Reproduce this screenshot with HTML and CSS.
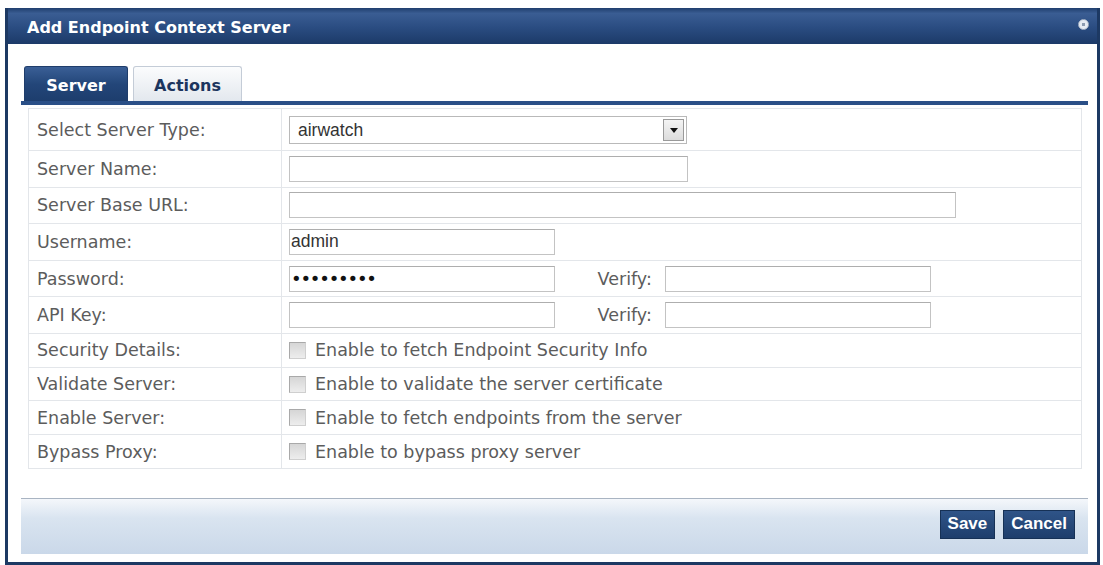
FILE: index.html
```html
<!DOCTYPE html>
<html lang="en">
<head>
    <meta charset="UTF-8">
    <title>Add Endpoint Context Server</title>
    <link rel="stylesheet" href="styles.css">
</head>
<body>
    <div class="dialog">
        <div class="titlebar">
            <span class="title">Add Endpoint Context Server</span>
            <span class="close"></span>
        </div>
        <div class="dialog-body">
            <div class="tabs">
                <div class="tab active">Server</div>
                <div class="tab">Actions</div>
            </div>
            <div class="panel">
                <table class="form">
                    <tr class="row-select">
                        <td class="label">Select Server Type:</td>
                        <td class="field">
                            <div class="select-box">
                                <select>
                                    <option>airwatch</option>
                                </select>
                                <span class="arrow"></span>
                            </div>
                        </td>
                    </tr>
                    <tr class="row-input">
                        <td class="label">Server Name:</td>
                        <td class="field"><input type="text" class="w-name"></td>
                    </tr>
                    <tr class="row-input">
                        <td class="label">Server Base URL:</td>
                        <td class="field"><input type="text" class="w-url"></td>
                    </tr>
                    <tr class="row-input">
                        <td class="label">Username:</td>
                        <td class="field"><input type="text" class="w-short" value="admin"></td>
                    </tr>
                    <tr class="row-input">
                        <td class="label">Password:</td>
                        <td class="field">
                            <input type="password" class="w-short secret" value="password1">
                            <span class="verify">Verify:</span>
                            <input type="password" class="w-short">
                        </td>
                    </tr>
                    <tr class="row-input">
                        <td class="label">API Key:</td>
                        <td class="field">
                            <input type="text" class="w-short">
                            <span class="verify">Verify:</span>
                            <input type="text" class="w-short">
                        </td>
                    </tr>
                    <tr class="row-check">
                        <td class="label">Security Details:</td>
                        <td class="field"><label><input type="checkbox">Enable to fetch Endpoint Security Info</label></td>
                    </tr>
                    <tr class="row-check">
                        <td class="label">Validate Server:</td>
                        <td class="field"><label><input type="checkbox">Enable to validate the server certificate</label></td>
                    </tr>
                    <tr class="row-check">
                        <td class="label">Enable Server:</td>
                        <td class="field"><label><input type="checkbox">Enable to fetch endpoints from the server</label></td>
                    </tr>
                    <tr class="row-check">
                        <td class="label">Bypass Proxy:</td>
                        <td class="field"><label><input type="checkbox">Enable to bypass proxy server</label></td>
                    </tr>
                </table>
            </div>
            <div class="footer">
                <button class="btn">Save</button>
                <button class="btn">Cancel</button>
            </div>
        </div>
    </div>
</body>
</html>
```

FILE: styles.css
```css
body {
    margin: 0;
    background-color: #fff;
    font-family: "DejaVu Sans", Verdana, sans-serif;
}
.dialog {
    margin: 8px 3px 0 5px;
    height: 557px;
    box-sizing: border-box;
    border: 3px solid #1d3963;
    border-top: none;
    background-color: #fff;
    display: flex;
    flex-direction: column;
}
.titlebar {
    height: 36px;
    display: flex;
    align-items: center;
    justify-content: space-between;
    padding: 0 8px 0 19px;
    background: linear-gradient(#203f6e, #3a5d93 15%, #2a4c81 55%, #1c3a68);
    color: #fff;
}
.title {
    font-weight: bold;
    font-size: 16px;
    padding-top: 2px;
}
.close {
    width: 9px;
    height: 9px;
    border-radius: 50%;
    background: radial-gradient(circle, #8c9bb0 0 1.5px, #e6ebf2 2px);
    border: 1px solid #aab6c8;
    margin-top: -4px;
}
.dialog-body {
    flex: 1;
    padding: 22px 9px 8px 13px;
    display: flex;
    flex-direction: column;
}
.tabs {
    display: flex;
    gap: 5px;
    padding-left: 3px;
    height: 35px;
    border-bottom: 4px solid #2a4f87;
}
.tab {
    width: 109px;
    box-sizing: border-box;
    display: flex;
    align-items: center;
    justify-content: center;
    font-weight: bold;
    font-size: 16px;
    color: #1c355e;
    border: 1px solid #c4ccd7;
    border-bottom: none;
    border-radius: 3px 3px 0 0;
    background: linear-gradient(#fbfcfd, #e3e8ee);
    padding-top: 3px;
}
.tab.active {
    width: 104px;
    color: #fff;
    border-color: #1f3d6b;
    background: linear-gradient(#3a5f96, #234679 50%, #1d3d6d);
}
.panel {
    padding: 3px 6px 0 7px;
    flex: 1;
}
.form {
    width: 100%;
    border-collapse: collapse;
    border: 1px solid #d8dde3;
}
.form td {
    border: 1px solid #e3e6ea;
    padding: 0;
    vertical-align: middle;
}
.row-select {
    height: 42px;
}
.row-input {
    height: 36.6px;
}
.row-check {
    height: 33.75px;
}
.label {
    width: 244px;
    padding-left: 8px !important;
    font-size: 17.5px;
    color: #5c5c5c;
}
.field {
    padding-left: 7px !important;
    font-size: 17.5px;
    color: #5c5c5c;
}
.field label {
    display: flex;
    align-items: center;
}
input[type="text"],
input[type="password"] {
    height: 26px;
    box-sizing: border-box;
    border: 1px solid #c3c3c3;
    border-top-color: #aeaeae;
    padding: 0 1px;
    font-family: "Liberation Sans", Arial, sans-serif;
    font-size: 17.5px;
    color: #333;
    vertical-align: middle;
    outline: none;
}
.secret {
    font-family: "DejaVu Sans", sans-serif !important;
    font-size: 18px !important;
    letter-spacing: -1.2px;
    color: #111 !important;
}
.w-name {
    width: 399px;
}
.w-url {
    width: 667px;
}
.w-short {
    width: 266px;
}
.verify {
    margin: 0 8px 0 37px;
    vertical-align: middle;
}
.select-box {
    width: 398px;
    height: 28px;
    box-sizing: border-box;
    border: 1px solid #b9b9b9;
    display: flex;
    align-items: center;
    background-color: #fff;
}
.select-box select {
    flex: 1;
    appearance: none;
    border: none;
    background: transparent;
    padding-left: 8px;
    font-family: "Liberation Sans", Arial, sans-serif;
    font-size: 17.5px;
    color: #333;
    outline: none;
}
.arrow {
    width: 21px;
    height: 22px;
    margin-right: 2px;
    box-sizing: border-box;
    border: 1px solid #9a9a9a;
    background: linear-gradient(#f4f4f4, #dcdcdc);
    position: relative;
}
.arrow::after {
    content: "";
    position: absolute;
    left: 6px;
    top: 8px;
    border-left: 4px solid transparent;
    border-right: 4px solid transparent;
    border-top: 5px solid #111;
}
input[type="checkbox"] {
    appearance: none;
    width: 17px;
    height: 17px;
    margin: 0 9px 0 0;
    border: 1px solid #a9a9a9;
    border-right-color: #cfcfcf;
    border-bottom-color: #cfcfcf;
    background: linear-gradient(#d6d6d6, #ededed);
}
.footer {
    height: 56px;
    box-sizing: border-box;
    border-top: 1px solid #a9b4c2;
    background: linear-gradient(#f4f7fb, #d9e4f0 35%, #cad8e9);
    display: flex;
    justify-content: flex-end;
    align-items: center;
    gap: 8px;
    padding: 0 13px 5px 0;
}
.btn {
    height: 29px;
    padding: 0 7px;
    border: 1px solid #163156;
    background: linear-gradient(#2f5488, #1e3e6c);
    color: #fff;
    font-family: "Liberation Sans", Arial, sans-serif;
    font-weight: bold;
    font-size: 17px;
    cursor: pointer;
}
```
